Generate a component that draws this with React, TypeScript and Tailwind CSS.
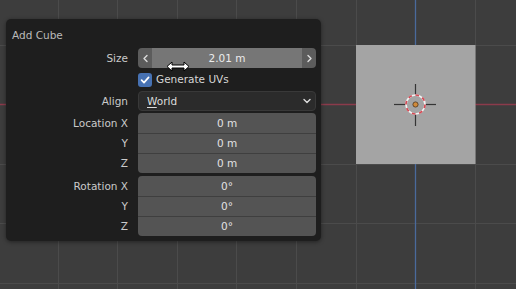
import React from "react";

const FONT = { fontFamily: '"DejaVu Sans", "Liberation Sans", sans-serif' };

// grid lines of the viewport (px)
const VX = [58, 117, 177, 236, 296, 356, 475];
const HY = [45, 164, 223, 283];

function Viewport() {
  return (
    <svg className="absolute inset-0" width={516} height={289} viewBox="0 0 516 289">
      <rect width={516} height={289} fill="#3d3d3d" />
      {VX.map((x) => (
        <line key={"v" + x} x1={x + 0.5} y1={0} x2={x + 0.5} y2={289} stroke="#4b4b4b" strokeWidth={1} />
      ))}
      {HY.map((y) => (
        <line key={"h" + y} x1={0} y1={y + 0.5} x2={516} y2={y + 0.5} stroke="#4b4b4b" strokeWidth={1} />
      ))}
      {/* axes */}
      <line x1={0} y1={104.5} x2={516} y2={104.5} stroke="#8b3b4b" strokeWidth={1.3} />
      <line x1={415.5} y1={0} x2={415.5} y2={289} stroke="#4a6a9c" strokeWidth={1.3} />
      {/* cube */}
      <rect x={356} y={45} width={119.5} height={119} fill="#a4a4a4" />
      {/* 3d cursor */}
      <g>
        <line x1={394} y1={104.5} x2={406} y2={104.5} stroke="#353535" strokeWidth={1.2} />
        <line x1={425} y1={104.5} x2={436} y2={104.5} stroke="#353535" strokeWidth={1.2} />
        <line x1={415.5} y1={84} x2={415.5} y2={95} stroke="#353535" strokeWidth={1.2} />
        <line x1={415.5} y1={114} x2={415.5} y2={126} stroke="#353535" strokeWidth={1.2} />
        <circle cx={415.5} cy={104.5} r={9.5} fill="none" stroke="#f4f4f4" strokeWidth={1.7} />
        <circle cx={415.5} cy={104.5} r={9.5} fill="none" stroke="#d64a55" strokeWidth={1.7} strokeDasharray="3.7 3.7" />
        <circle cx={415.5} cy={104.5} r={2.6} fill="#d08a3a" stroke="#4a3520" strokeWidth={0.8} />
      </g>
    </svg>
  );
}

function Chevron({ dir }: { dir: "left" | "right" | "down" }) {
  const d =
    dir === "left" ? "M5 1.5 L2 4.5 L5 7.5" : dir === "right" ? "M2 1.5 L5 4.5 L2 7.5" : "M1 2.5 L4 5.5 L7 2.5";
  return (
    <svg width={dir === "down" ? 8 : 7} height={9} viewBox={dir === "down" ? "0 0 8 9" : "0 0 7 9"}>
      <path d={d} fill="none" stroke="#dcdcdc" strokeWidth={1.4} strokeLinecap="round" strokeLinejoin="round" />
    </svg>
  );
}

function Label({ children }: { children: React.ReactNode }) {
  return <div className="h-[20px] flex items-center justify-end text-[#cacaca]">{children}</div>;
}

function Group({ labels, values }: { labels: string[]; values: string[] }) {
  return (
    <div className="flex gap-[10px]">
      <div className="w-[116px] flex flex-col">
        {labels.map((l, i) => (
          <Label key={i}>{l}</Label>
        ))}
      </div>
      <div className="w-[178px] rounded-[4px] overflow-hidden bg-[#545454] flex flex-col">
        {values.map((v, i) => (
          <div
            key={i}
            className={
              "h-[20px] flex items-center justify-center text-[#e2e2e2] " +
              (i > 0 ? "border-t border-[#3f3f3f]" : "")
            }
          >
            {v}
          </div>
        ))}
      </div>
    </div>
  );
}

export default function App() {
  return (
    <div className="relative w-[516px] h-[289px] overflow-hidden text-[10.5px] leading-none" style={FONT}>
      <Viewport />

      {/* Redo panel */}
      <div className="absolute left-[6px] top-[19px] w-[315px] rounded-[5px] bg-[#1e1e1e] pl-[6px] pr-[5px] pt-[6px] pb-[5px] shadow-[0_1px_4px_rgba(0,0,0,0.45)]">
        <div className="h-[20px] flex items-center text-[#bababa]">Add Cube</div>

        {/* Size */}
        <div className="mt-[3px] flex gap-[10px]">
          <div className="w-[116px]">
            <Label>Size</Label>
          </div>
          <div className="relative w-[178px] h-[20px] rounded-[4px] overflow-hidden flex">
            <div className="w-[14px] bg-[#5c5c5c] flex items-center justify-center">
              <Chevron dir="left" />
            </div>
            <div className="flex-1 bg-[#767676] flex items-center justify-center text-[#ececec]">2.01 m</div>
            <div className="w-[14px] bg-[#5c5c5c] flex items-center justify-center">
              <Chevron dir="right" />
            </div>
          </div>
        </div>

        {/* Generate UVs */}
        <div className="mt-[3px] h-[17px] flex items-center">
          <div className="w-[126px]" />
          <div className="w-[14px] h-[14px] rounded-[3px] bg-[#4772b3] flex items-center justify-center">
            <svg width={10} height={10} viewBox="0 0 10 10">
              <path d="M1.6 5.2 L4 7.6 L8.6 2.4" fill="none" stroke="#ffffff" strokeWidth={1.7} strokeLinecap="round" strokeLinejoin="round" />
            </svg>
          </div>
          <span className="ml-[4px] text-[#d6d6d6]">Generate UVs</span>
        </div>

        {/* Align */}
        <div className="mt-[3px] flex gap-[10px]">
          <div className="w-[116px]">
            <Label>Align</Label>
          </div>
          <div className="w-[178px] h-[20px] rounded-[4px] bg-[#2b2b2b] border border-[#393939] flex items-center justify-between pl-[8px] pr-[4px] text-[#dcdcdc]">
            <span>
              <span className="underline underline-offset-2">W</span>orld
            </span>
            <Chevron dir="down" />
          </div>
        </div>

        <div className="mt-[2px]">
          <Group labels={["Location X", "Y", "Z"]} values={["0 m", "0 m", "0 m"]} />
        </div>
        <div className="mt-[3px]">
          <Group labels={["Rotation X", "Y", "Z"]} values={["0°", "0°", "0°"]} />
        </div>
      </div>

      {/* mouse cursor */}
      <svg className="absolute left-[166px] top-[61px]" width={24} height={11} viewBox="0 0 24 11">
        <path
          d="M1 5.5 L6 1 L6 4 L18 4 L18 1 L23 5.5 L18 10 L18 7 L6 7 L6 10 Z"
          fill="#ffffff"
          stroke="#000000"
          strokeWidth={1}
          strokeLinejoin="round"
        />
      </svg>
    </div>
  );
}
